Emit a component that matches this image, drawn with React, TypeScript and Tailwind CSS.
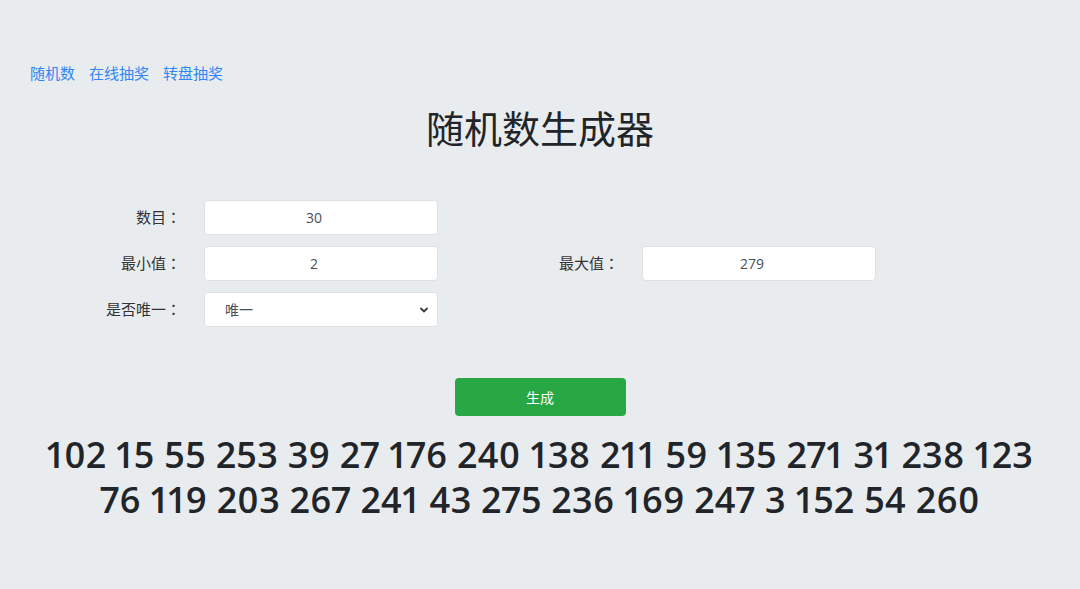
import { useState } from "react";

const numbersLine1 = [102, 15, 55, 253, 39, 27, 176, 240, 138, 211, 59, 135, 271, 31, 238, 123];
const numbersLine2 = [76, 119, 203, 267, 241, 43, 275, 236, 169, 247, 3, 152, 54, 260];

const font = { fontFamily: '"Open Sans", "Noto Sans CJK SC", sans-serif' };
// centered full-width colon, as in the original
const colon = { fontFamily: '"Noto Sans CJK TC", sans-serif' };

function Field({ value, onChange }: { value: string; onChange: (v: string) => void }) {
  return (
    <input
      value={value}
      onChange={(e) => onChange(e.target.value)}
      className="h-[35px] w-full rounded border border-[#dde1e6] bg-white pr-[14px] text-center text-[14px] text-[#495057] outline-none"
    />
  );
}

function Label({ text }: { text: string }) {
  return (
    <label className="flex h-[35px] items-center justify-end">
      {text}
      <span style={colon}>：</span>
    </label>
  );
}

export default function App() {
  const [count, setCount] = useState("30");
  const [min, setMin] = useState("2");
  const [max, setMax] = useState("279");
  const [unique, setUnique] = useState("唯一");

  return (
    <div className="min-h-[589px] bg-[#e9ecef] pt-[62px] text-[#212529]" style={font}>
      <nav className="flex gap-[14px] pl-[30px] text-[15px] leading-[22px] text-[#2f86f6]">
        <a href="#">随机数</a>
        <a href="#">在线抽奖</a>
        <a href="#">转盘抽奖</a>
      </nav>

      <h1 className="mt-[20px] text-center text-[38px] leading-[48px] font-normal">随机数生成器</h1>

      <div className="mt-[48px] grid grid-cols-[181px_234px_158px_234px] gap-x-[23px] gap-y-[11px] text-[15px] text-[#333]">
        <Label text="数目" />
        <Field value={count} onChange={setCount} />
        <div />
        <div />

        <Label text="最小值" />
        <Field value={min} onChange={setMin} />
        <Label text="最大值" />
        <Field value={max} onChange={setMax} />

        <Label text="是否唯一" />
        <div className="relative">
          <select
            value={unique}
            onChange={(e) => setUnique(e.target.value)}
            className="h-[35px] w-full appearance-none rounded border border-[#dde1e6] bg-white pl-[20px] text-[14px] text-[#495057] outline-none"
          >
            <option>唯一</option>
            <option>不唯一</option>
          </select>
          <svg className="pointer-events-none absolute right-[9px] top-[14px] h-[8px] w-[10px]" viewBox="0 0 10 8">
            <path d="M1.5 2l3.5 3.5L8.5 2" fill="none" stroke="#343a40" strokeWidth="1.8" />
          </svg>
        </div>
      </div>

      <div className="mt-[51px] flex justify-center">
        <button className="h-[38px] w-[171px] rounded bg-[#28a745] text-[14px] text-white">生成</button>
      </div>

      <div className="mt-[16px] text-center text-[36px] leading-[45px] font-semibold tracking-[0.4px] text-[#212529] proportional-nums">
        <div className="whitespace-nowrap">{numbersLine1.join(" ")}</div>
        <div className="whitespace-nowrap">{numbersLine2.join(" ")}</div>
      </div>
    </div>
  );
}
